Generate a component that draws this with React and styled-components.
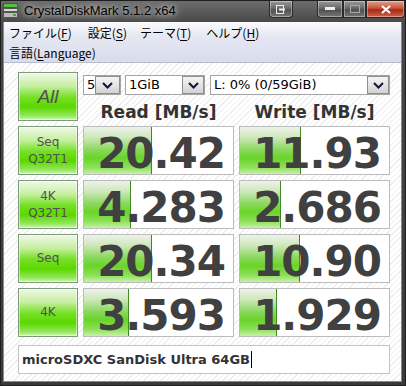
import React from 'react'
import styled, { createGlobalStyle } from 'styled-components'

const GlobalStyle = createGlobalStyle`
  html, body {
    margin: 0;
    padding: 0;
    background: #fff;
  }
`

const Window = styled.div`
  width: 406px;
  height: 386px;
  box-sizing: border-box;
  display: flex;
  flex-direction: column;
  background: linear-gradient(to bottom, #6c6c6c 0px, #474747 22px, #3a3a3a 100%);
  border: 1px solid #1e1e1e;
  overflow: hidden;
  font-family: "DejaVu Sans", sans-serif;
`

const TitleBar = styled.div`
  height: 21px;
  display: flex;
  align-items: flex-start;
`

const TitleIcon = styled.svg`
  margin: 2px 0 0 2px;
  flex: none;
`

const TitleText = styled.div`
  margin-left: 6px;
  font-family: "Liberation Sans", Arial, sans-serif;
  font-size: 13px;
  line-height: 20px;
  color: #000;
  text-shadow: 0 0 4px #c8c8c8, 0 0 8px #bdbdbd, 0 0 12px #9a9a9a;
`

const Caption = styled.div`
  margin-left: auto;
  display: flex;
  align-items: flex-start;
`

const CapButton = styled.div`
  height: 17px;
  width: ${p => p.w}px;
  box-sizing: border-box;
  border: 1px solid #2a2a2a;
  border-top: none;
  box-shadow: inset 0 0 0 1px rgba(255, 255, 255, 0.35);
  background: ${p => p.red
    ? 'linear-gradient(to bottom, #e0a090 0%, #c8533c 45%, #a52a14 55%, #d0604a 100%)'
    : 'linear-gradient(to bottom, #9a9a9a 0%, #6a6a6a 45%, #505050 55%, #777 100%)'};
  border-radius: ${p => p.radius || '0'};
  display: flex;
  align-items: center;
  justify-content: center;
  margin-right: ${p => p.gap || 0}px;
`

const Body = styled.div`
  flex: 1;
  margin: 0 3px 3px 2px;
  display: flex;
  flex-direction: column;
  border: 1px solid #8a8a8a;
  border-top: none;
`

const MenuBar = styled.div`
  height: 40px;
  padding-left: 5px;
  background: linear-gradient(to bottom, #fbfbfd 0%, #e6e9f3 35%, #d8dcec 100%);
  border-bottom: 1px solid #b9bdcc;
  font-family: "Noto Sans CJK JP", "DejaVu Sans", sans-serif;
  font-size: 12px;
  color: #000;
`

const MenuRow = styled.div`
  height: 20px;
  display: flex;
  align-items: center;
`

const MenuItem = styled.span`
  margin-right: ${p => p.gap || 0}px;
  white-space: nowrap;
  & u {
    text-underline-offset: 2px;
  }
`

const Content = styled.div`
  flex: 1;
  padding: 9px 0 0 14px;
  background-color: #fff;
  background-image: repeating-linear-gradient(135deg, #fff 0px, #fff 3px, #ededed 3px, #ededed 4px);
`

const Top = styled.div`
  display: grid;
  grid-template-columns: 60px 307px;
  column-gap: 5px;
`

const GreenButton = styled.div`
  height: 49px;
  box-sizing: border-box;
  border: 1px solid #7d9a7d;
  box-shadow: inset 0 0 0 1px rgba(255, 255, 255, 0.5);
  background: linear-gradient(to bottom, #f0f8ea 0%, #c6ef9f 28%, #74e024 52%, #5cd800 72%, #8ee656 90%, #cff4b4 100%);
  display: flex;
  flex-direction: column;
  align-items: center;
  justify-content: center;
  color: #505050;
  font-size: 12px;
  line-height: 17px;
`

const AllLabel = styled.span`
  font-family: "Liberation Sans", Arial, sans-serif;
  font-style: italic;
  font-size: 19px;
  color: #505050;
`

const RightTop = styled.div`
  display: flex;
  flex-direction: column;
  padding-top: 3px;
`

const Selects = styled.div`
  display: flex;
  height: 20px;
`

const Select = styled.div`
  width: ${p => p.w}px;
  margin-right: ${p => p.gap || 0}px;
  box-sizing: border-box;
  border: 1px solid #a5a5a5;
  background: #fff;
  display: flex;
  font-size: 13px;
  color: #000;
  overflow: hidden;
`

const SelectText = styled.div`
  flex: 1;
  min-width: 0;
  padding-left: 3px;
  line-height: 18px;
  white-space: nowrap;
  overflow: hidden;
`

const DropButton = styled.div`
  width: ${p => p.w || 22}px;
  flex: none;
  box-sizing: border-box;
  border: 1px solid #8f8f8f;
  background: linear-gradient(to bottom, #f4f4f4 0%, #e4e4e4 50%, #d2d2d2 100%);
  display: flex;
  align-items: center;
  justify-content: center;
`

const Headers = styled.div`
  display: grid;
  grid-template-columns: 151px 151px;
  column-gap: 5px;
  height: 26px;
`

const Header = styled.div`
  text-align: center;
  font-weight: bold;
  font-size: 17px;
  line-height: 18px;
  padding-top: 8px;
  color: #333;
  white-space: nowrap;
`

const Row = styled.div`
  display: grid;
  grid-template-columns: 60px 151px 151px;
  column-gap: 5px;
  margin-top: 5px;
  height: 49px;
`

const Cell = styled.div`
  position: relative;
  box-sizing: border-box;
  border: 1px solid #bcbcbc;
  background: #fff;
`

const Bar = styled.div`
  position: absolute;
  left: 0;
  top: 0;
  bottom: 0;
  border-right: 1px solid #3c8c1e;
  background: linear-gradient(to bottom, #eef2ea 0%, #cfe8bc 22%, #8ad85e 48%, #6ad428 66%, #8ee05a 86%, #c8f0aa 100%);
`

const Value = styled.div`
  position: relative;
  text-align: right;
  padding: 9px 8px 0 0;
  font-weight: bold;
  font-size: 42px;
  line-height: 36px;
  letter-spacing: -1px;
  color: #404040;
`

const Comment = styled.div`
  margin-top: 8px;
  width: 372px;
  height: 29px;
  box-sizing: border-box;
  border: 1px solid #c4c4c4;
  background: #fff;
  display: flex;
  align-items: center;
  padding-left: 3px;
  font-weight: bold;
  font-size: 13px;
  color: #333;
`

const Caret = styled.span`
  display: inline-block;
  width: 1px;
  height: 17px;
  background: #000;
  margin-left: 1px;
`

const Chevron = () => (
  <svg width="11" height="7" viewBox="0 0 11 7">
    <polyline points="1,1 5.5,5.5 10,1" fill="none" stroke="#14143c" strokeWidth="2" />
  </svg>
)

const rows = [
  { label: ['Seq', 'Q32T1'], read: '20.42', rw: 69, write: '11.93', ww: 62 },
  { label: ['4K', 'Q32T1'], read: '4.283', rw: 48, write: '2.686', ww: 42 },
  { label: ['Seq'], read: '20.34', rw: 69, write: '10.90', ww: 61 },
  { label: ['4K'], read: '3.593', rw: 46, write: '1.929', ww: 38 },
]

const App = () => {
  return (
    <React.Fragment>
      <GlobalStyle />
      <Window>
        <TitleBar>
          <TitleIcon width="15" height="15" viewBox="0 0 15 15">
            <rect x="0.5" y="0.5" width="14" height="4" fill="#58c040" stroke="#2d6a22" />
            <rect x="0.5" y="5.5" width="14" height="3" fill="#d8d8d8" stroke="#555" />
            <rect x="0.5" y="9.5" width="14" height="5" fill="#bdbdbd" stroke="#555" />
            <rect x="10" y="11" width="3" height="2" fill="#3fb03a" />
          </TitleIcon>
          <TitleText>CrystalDiskMark 5.1.2 x64</TitleText>
          <Caption>
            <CapButton w={24} gap={24} radius="0 0 4px 4px">
              <svg width="10" height="9" viewBox="0 0 10 9">
                <rect x="0.5" y="0.5" width="7" height="8" fill="none" stroke="#eee" />
                <polyline points="3,4.5 9,4.5" stroke="#eee" strokeWidth="2" />
              </svg>
            </CapButton>
            <CapButton w={26} radius="0 0 0 4px">
              <svg width="10" height="4"><rect width="10" height="3" fill="#eee" /></svg>
            </CapButton>
            <CapButton w={23}>
              <svg width="10" height="8"><rect x="0.5" y="0.5" width="9" height="7" fill="none" stroke="#aaa" /></svg>
            </CapButton>
            <CapButton w={39} red radius="0 0 4px 0">
              <svg width="10" height="9" viewBox="0 0 10 9">
                <path d="M1,1 L9,8 M9,1 L1,8" stroke="#fff" strokeWidth="2.2" />
              </svg>
            </CapButton>
          </Caption>
        </TitleBar>
        <Body>
          <MenuBar>
            <MenuRow>
              <MenuItem gap={16}>ファイル(<u>F</u>)</MenuItem>
              <MenuItem gap={13}>設定(<u>S</u>)</MenuItem>
              <MenuItem gap={15}>テーマ(<u>T</u>)</MenuItem>
              <MenuItem>ヘルプ(<u>H</u>)</MenuItem>
            </MenuRow>
            <MenuRow>
              <MenuItem>言語(<u>L</u>anguage)</MenuItem>
            </MenuRow>
          </MenuBar>
          <Content>
            <Top>
              <GreenButton>
                <AllLabel>All</AllLabel>
              </GreenButton>
              <RightTop>
                <Selects>
                  <Select w={38} gap={4}>
                    <SelectText>5</SelectText>
                    <DropButton w={25}><Chevron /></DropButton>
                  </Select>
                  <Select w={80} gap={5}>
                    <SelectText>1GiB</SelectText>
                    <DropButton><Chevron /></DropButton>
                  </Select>
                  <Select w={180}>
                    <SelectText>L: 0% (0/59GiB)</SelectText>
                    <DropButton><Chevron /></DropButton>
                  </Select>
                </Selects>
                <Headers>
                  <Header>Read [MB/s]</Header>
                  <Header>Write [MB/s]</Header>
                </Headers>
              </RightTop>
            </Top>
            {rows.map((r, i) => (
              <Row key={i}>
                <GreenButton>
                  {r.label.map(l => <span key={l}>{l}</span>)}
                </GreenButton>
                <Cell>
                  <Bar style={{ width: r.rw - 2 }} />
                  <Value>{r.read}</Value>
                </Cell>
                <Cell>
                  <Bar style={{ width: r.ww - 2 }} />
                  <Value>{r.write}</Value>
                </Cell>
              </Row>
            ))}
            <Comment>
              microSDXC SanDisk Ultra 64GB<Caret />
            </Comment>
          </Content>
        </Body>
      </Window>
    </React.Fragment>
  )
}

export default App
